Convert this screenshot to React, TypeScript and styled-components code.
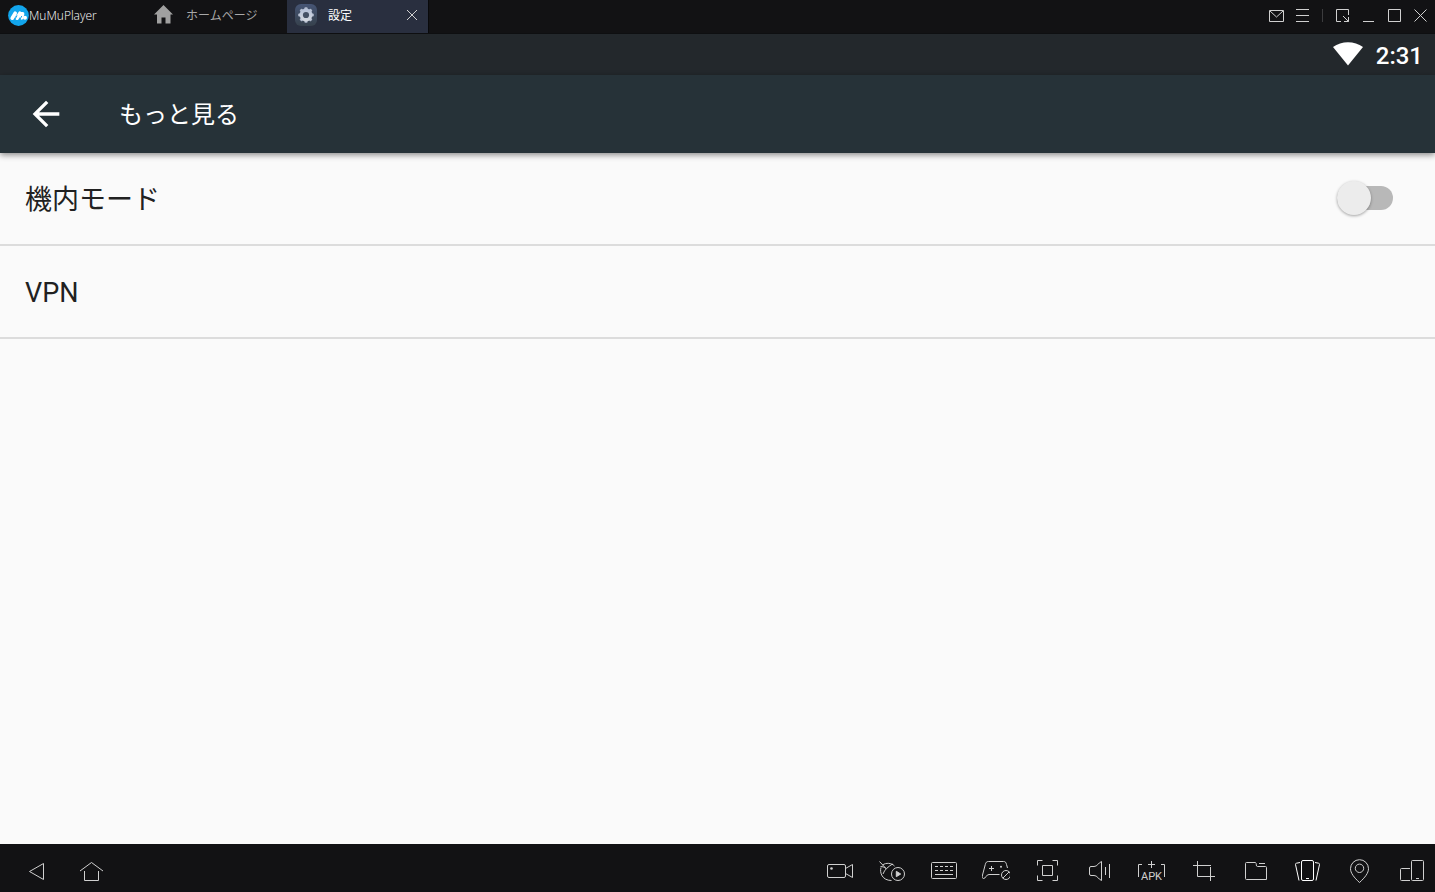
import React, { useState } from "react";
import styled, { createGlobalStyle } from "styled-components";

const GlobalStyle = createGlobalStyle`
  *, *::before, *::after { box-sizing: border-box; }
  body {
    margin: 0;
    background: #fafafa;
    font-family: Roboto, "Noto Sans CJK JP", sans-serif;
  }
  button, input { font: inherit; }
`;

const Screen = styled.div`
  display: flex;
  flex-direction: column;
  min-height: 100vh;
`;

/* ---------- emulator window bar ---------- */

const TitleBar = styled.header`
  display: flex;
  align-items: flex-start;
  height: 34px;
  background: #121214;
  border-bottom: 1px solid #0e0f11;
`;

const Brand = styled.div`
  display: flex;
  align-items: center;
  flex: none;
  width: 145px;
  height: 32px;
  padding-left: 8px;
  color: #fff;
  font: 300 12px/16px "Open Sans", sans-serif;
`;

const Tab = styled.div<{ $active?: boolean }>`
  display: flex;
  align-items: center;
  justify-content: space-between;
  flex: none;
  width: 142px;
  height: 33px;
  padding: 0 10px 3px 8px;
  background: ${(p) => (p.$active ? "#292f3f" : "transparent")};
  border-right: 1px solid ${(p) => (p.$active ? "#08090b" : "transparent")};
`;

const TabButton = styled.button<{ $active?: boolean }>`
  display: flex;
  align-items: center;
  gap: 11px;
  height: 100%;
  padding: 0;
  border: 0;
  background: none;
  color: ${(p) => (p.$active ? "#fff" : "#a8a8a8")};
  font: 12px/16px "Noto Sans CJK JP", sans-serif;
  white-space: nowrap;
`;

const IconButton = styled.button<{ $size: number; $color?: string }>`
  display: flex;
  align-items: center;
  justify-content: center;
  flex: none;
  width: ${(p) => p.$size}px;
  height: ${(p) => p.$size}px;
  padding: 0;
  border: 0;
  background: none;
  color: ${(p) => p.$color ?? "#d0d0d0"};
`;

const WindowControls = styled.div`
  display: flex;
  align-items: center;
  gap: 10px;
  height: 32px;
  margin-left: auto;
  padding-right: 6px;
`;

const Separator = styled.span`
  width: 1px;
  height: 13px;
  margin: 0 2px 2px 1px;
  background: #3c3c3e;
`;

/* ---------- Android screen ---------- */

const StatusBar = styled.div`
  display: flex;
  align-items: center;
  justify-content: flex-end;
  gap: 13px;
  height: 41px;
  padding: 0 12px 1px 0;
  background: #23282c;
  color: #fff;
`;

const Clock = styled.time`
  padding-top: 3px;
  font-size: 24px;
  line-height: 28px;
  font-weight: 500;
`;

const AppBar = styled.div`
  display: flex;
  align-items: center;
  gap: 53px;
  height: 78px;
  padding: 0 26px;
  background: #263238;
  color: #fff;
  box-shadow: 0 2px 6px rgba(0, 0, 0, 0.45);
`;

const Title = styled.h1`
  margin: 0;
  padding-top: 2px;
  font-size: 24px;
  line-height: 36px;
  font-weight: 400;
`;

const Settings = styled.main`
  flex: 1;
  display: flex;
  flex-direction: column;
`;

const SettingRow = styled.div`
  display: flex;
  align-items: center;
  justify-content: space-between;
  height: 93px;
  padding: 0 42px 1px 25px;
  border-bottom: 2px solid #dcdcdc;
  color: #212121;
  font-size: 27px;
  line-height: 40px;
`;

const RowLabel = styled.label`
  flex: 1;
  padding-top: 4px;
`;

const RowLink = styled.a`
  flex: 1;
  padding-top: 4px;
  color: inherit;
  text-decoration: none;
`;

const Switch = styled.input`
  appearance: none;
  display: grid;
  align-items: center;
  width: 56px;
  height: 34px;
  margin: 0;
  &::before, &::after {
    content: "";
    grid-area: 1 / 1;
  }
  &::before {
    justify-self: center;
    width: 56px;
    height: 24px;
    border-radius: 12px;
    background: #b8b8b8;
  }
  &::after {
    justify-self: start;
    width: 34px;
    height: 34px;
    border-radius: 50%;
    background: #ececec;
    box-shadow: 0 1px 3px rgba(0, 0, 0, 0.35);
  }
  &:checked::before { background: #80cbc4; }
  &:checked::after { justify-self: end; background: #009688; }
`;

/* ---------- emulator tool bar ---------- */

const ToolBar = styled.footer`
  display: flex;
  align-items: center;
  justify-content: space-between;
  height: 48px;
  padding: 6px 9px 0 22px;
  background: #121214;
`;

const ToolGroup = styled.nav<{ $gap: number }>`
  display: flex;
  gap: ${(p) => p.$gap}px;
`;

/* ---------- icons ---------- */

const Line = ({ size, children }: { size: number; children: React.ReactNode }) => (
  <svg width={size} height={size} viewBox={`0 0 ${size} ${size}`} fill="none" stroke="currentColor" aria-hidden="true">
    {children}
  </svg>
);

const Logo = () => (
  <svg width="21" height="22" viewBox="0 0 21 22" aria-hidden="true">
    <circle cx="10.5" cy="10.5" r="10.4" fill="#12a5ec" />
    <path d="M4.2 13.2 7.2 8.2M9 13.2l3-5M13.6 12.8l1-4" stroke="#fff" strokeWidth="3.6" strokeLinecap="round" fill="none" />
    <circle cx="17" cy="12.8" r="2" fill="#fff" />
    <path d="M6.9 14.2l2.2-3.6M12 14.2l1.8-3.2" stroke="#12a5ec" strokeWidth="1" />
  </svg>
);

const HomeGlyph = () => (
  <svg width="22" height="20" viewBox="0 0 22 20" aria-hidden="true">
    <path d="M10.5 0 20 9.4H17.5V18.5H12.5V12.5H8.5V18.5H4V9.4H1Z" fill="#a0a0a0" />
  </svg>
);

const gearTeeth = [0, 45, 90, 135, 180, 225, 270, 315];

const SettingsGlyph = () => (
  <svg width="22" height="22" viewBox="0 0 22 22" aria-hidden="true">
    <defs>
      <linearGradient id="tile" x1="0" y1="0" x2="0" y2="1">
        <stop offset="0" stopColor="#465575" />
        <stop offset="1" stopColor="#36414c" />
      </linearGradient>
      <linearGradient id="gear" x1="0" y1="0" x2="0" y2="1">
        <stop offset="0" stopColor="#b4c0d8" />
        <stop offset="1" stopColor="#d5d9df" />
      </linearGradient>
    </defs>
    <rect width="22" height="22" rx="6" fill="url(#tile)" />
    <g fill="#b4bdcf">
      {gearTeeth.map((a) => (
        <rect key={a} x="9.4" y="3.2" width="3.2" height="4" rx="1" transform={`rotate(${a} 11 11)`} />
      ))}
    </g>
    <circle cx="11" cy="11" r="6.4" fill="url(#gear)" />
    <circle cx="11" cy="11" r="3.1" fill="#465265" />
  </svg>
);

const windowTools = [
  { name: "メッセージ", art: <path d="M.5 2.5H14.5V13.5H.5ZM1 3l6.5 6L14 3" /> },
  { name: "メニュー", art: <path d="M1 1.5H14M1 7.5H14M1 13.5H14" /> },
];

const windowButtons = [
  { name: "サイズ変更", art: <path d="M6 13.5H1.5V1.5H13.5V7M8 8l5.5 5.5M13.5 9V13.5H9" /> },
  { name: "最小化", art: <path d="M2 13.5H13" /> },
  { name: "最大化", art: <path d="M1.5 1.5H13.5V13.5H1.5Z" /> },
  { name: "閉じる", art: <path d="M1.5 1.5l12 12M13.5 1.5l-12 12" /> },
];

const navTools = [
  { name: "戻る", art: <path d="M7.5 14.5 21.5 6.5V22.5Z" /> },
  { name: "ホーム", art: <path d="M2 14 13.5 5.5 25 14M6.5 14V23.5H20.5V14" /> },
];

const tools = [
  {
    name: "録画",
    art: (
      <>
        <rect x="1.5" y="7.5" width="18" height="13" rx="1.5" />
        <circle cx="5.5" cy="11.5" r="1.3" fill="currentColor" stroke="none" />
        <path d="M19.5 11.5 26.5 7.5V20.5L19.5 16.5" />
      </>
    ),
  },
  {
    name: "操作の記録",
    art: (
      <>
        <path d="M1.5 4.5 8 11.5M2.5 9.5C4.5 9.5 6.5 10.3 8 11.5M14.5 7C10.5 9.5 6.5 12.5 5 17M3 10.5C1.5 15.5 4 23.5 13.5 23.5M4.5 8C8 5.5 13.5 5.8 16.5 9" />
        <circle cx="20" cy="17" r="6.5" />
        <path d="M18.3 14.3v5.4L22.7 17Z" fill="currentColor" />
      </>
    ),
  },
  {
    name: "キーボード",
    art: (
      <>
        <rect x="1.5" y="5.5" width="25" height="16" rx="1" />
        <path d="M5 9.5H23M5 13.5H23" strokeDasharray="3 2" />
        <path d="M5 17.5H23" />
      </>
    ),
  },
  {
    name: "ゲームパッド",
    art: (
      <>
        <path d="M25.5 11 24.5 7.5C24 5.5 23.5 4.5 21.5 4.5H6.5C4.5 4.5 3.8 5.5 3.3 7.5L.5 18C0 20.5.5 21.5 1.5 21.5C4 21.5 4 17.5 7 17.5H17.5" />
        <path d="M9.5 9V14M7 11.5H12" />
        <circle cx="19" cy="9.8" r="1" fill="currentColor" stroke="none" />
        <circle cx="24" cy="18" r="4.5" />
        <path d="M20.8 21.2l6.4-6.4" />
      </>
    ),
  },
  {
    name: "全画面",
    art: <path d="M3.5 8.5V3.5H8.5M18.5 3.5H23.5V8.5M23.5 18.5V23.5H18.5M8.5 23.5H3.5V18.5M8.5 8.5H18.5V18.5H8.5Z" />,
  },
  {
    name: "音量",
    art: <path d="M15.5 4.5C12 6 11.5 9.5 8 9.5H5Q3.5 9.5 3.5 11V17Q3.5 18.5 5 18.5H8C11.5 18.5 12 22 15.5 23.5ZM19.5 10V18M23.5 7V21" />,
  },
  {
    name: "APKのインストール",
    art: (
      <>
        <path d="M4 7.5H.5V20M23 7.5H26.5V20M13.5 4V11M10 7.5H17" />
        <text x="13.5" y="23" textAnchor="middle" fontFamily="Roboto, sans-serif" fontSize="11" fill="currentColor" stroke="none">
          APK
        </text>
      </>
    ),
  },
  { name: "スクリーンショット", art: <path d="M3 8.5H21M7.5 4V19.5H25M20.5 10V24" /> },
  {
    name: "共有フォルダ",
    art: <path d="M4.5 5.5H13.5C15 6.5 13.5 9.5 15.5 9.5H23.5Q24.5 9.5 24.5 10.5V22.5H4.5Q3.5 22.5 3.5 21.5V6.5Q3.5 5.5 4.5 5.5ZM17 6.5H23" />,
  },
  {
    name: "シェイク",
    color: "#fff",
    art: (
      <>
        <rect x="7.5" y="3.5" width="12" height="20" rx="1.5" />
        <path d="M12 21.5H15M6 5.5 2.5 6.2Q1.3 6.5 1.5 7.5L5 23.5M21 5.5 24.5 6.2Q25.7 6.5 25.5 7.5L22 23.5" />
      </>
    ),
  },
  {
    name: "位置情報",
    art: (
      <>
        <path d="M13.5 25.5C8 20.5 4.5 16 4.5 11.7A9 9 0 0 1 22.5 11.7C22.5 16 19 20.5 13.5 25.5Z" />
        <circle cx="13.5" cy="11.3" r="4.2" />
      </>
    ),
  },
  {
    name: "マルチウィンドウ",
    art: (
      <>
        <rect x="13.5" y="3.5" width="12" height="20" rx="1" />
        <path d="M18 21.5H21M12 11.5H3.5Q2.5 11.5 2.5 12.5V22.5Q2.5 23.5 3.5 23.5H12" />
      </>
    ),
  },
];

export default function App() {
  const [airplane, setAirplane] = useState(false);

  return (
    <>
      <GlobalStyle />
      <Screen>
        <TitleBar>
          <Brand>
            <Logo />
            MuMuPlayer
          </Brand>
          <Tab>
            <TabButton>
              <HomeGlyph />
              ホームページ
            </TabButton>
          </Tab>
          <Tab $active>
            <TabButton $active>
              <SettingsGlyph />
              設定
            </TabButton>
            <IconButton $size={12} aria-label="タブを閉じる">
              <Line size={12}>
                <path d="M1 1l10 10M11 1l-10 10" />
              </Line>
            </IconButton>
          </Tab>
          <WindowControls>
            {windowTools.map((t) => (
              <IconButton key={t.name} $size={16} aria-label={t.name}>
                <Line size={16}>{t.art}</Line>
              </IconButton>
            ))}
            <Separator />
            {windowButtons.map((t) => (
              <IconButton key={t.name} $size={16} aria-label={t.name}>
                <Line size={16}>{t.art}</Line>
              </IconButton>
            ))}
          </WindowControls>
        </TitleBar>

        <StatusBar>
          <svg width="30" height="24" viewBox="0 0 30 24" aria-hidden="true">
            <path d="M0 5C8.5-1.5 21.5-1.5 30 5L15 23.5Z" fill="currentColor" />
          </svg>
          <Clock>2:31</Clock>
        </StatusBar>

        <AppBar>
          <IconButton $size={40} $color="#fff" aria-label="前に戻る">
            <svg width="40" height="40" viewBox="0 0 24 24" fill="currentColor" aria-hidden="true">
              <path d="M20 11H7.83l5.59-5.59L12 4l-8 8 8 8 1.41-1.41L7.83 13H20v-2z" />
            </svg>
          </IconButton>
          <Title>もっと見る</Title>
        </AppBar>

        <Settings>
          <SettingRow>
            <RowLabel htmlFor="airplane">機内モード</RowLabel>
            <Switch id="airplane" type="checkbox" checked={airplane} onChange={(e) => setAirplane(e.target.checked)} />
          </SettingRow>
          <SettingRow>
            <RowLink href="#vpn">VPN</RowLink>
          </SettingRow>
        </Settings>

        <ToolBar>
          <ToolGroup $gap={28}>
            {navTools.map((t) => (
              <IconButton key={t.name} $size={28} aria-label={t.name}>
                <Line size={28}>{t.art}</Line>
              </IconButton>
            ))}
          </ToolGroup>
          <ToolGroup $gap={24}>
            {tools.map((t) => (
              <IconButton key={t.name} $size={28} $color={t.color} aria-label={t.name}>
                <Line size={28}>{t.art}</Line>
              </IconButton>
            ))}
          </ToolGroup>
        </ToolBar>
      </Screen>
    </>
  );
}
